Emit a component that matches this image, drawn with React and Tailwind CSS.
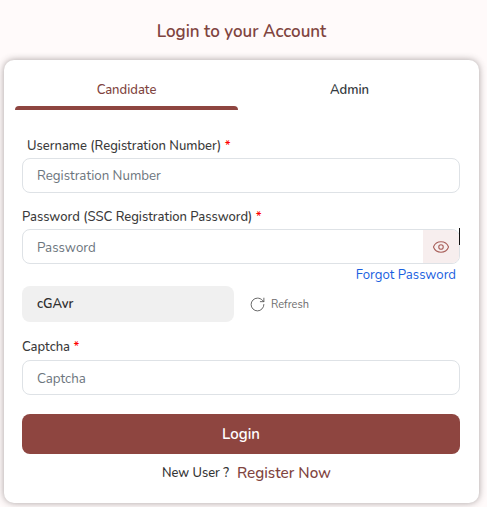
import { Eye, RotateCw } from "lucide-react";

function Req() {
  return <span className="text-[#ff0000]"> *</span>;
}

function Field({ placeholder, className = "" }) {
  return (
    <div className={`h-[35px] w-full rounded-[8px] border border-[#dee2e6] bg-white pl-[14px] flex items-center text-[13.3px] text-[#6c757d] ${className}`}>
      {placeholder}
    </div>
  );
}

export default function App() {
  return (
    <div className="h-[507px] w-[487px] overflow-hidden bg-[#fffafa] font-['Nunito','Lato','Open_Sans',sans-serif]">
      <h1 className="h-[60px] pt-[21px] pr-[4px] text-center text-[17px] leading-[21px] font-semibold text-[#7f4440]">
        Login to your Account
      </h1>
      <div className="ml-[4px] h-[443px] w-[475px] rounded-[10px] bg-white shadow-[0_0_7px_rgba(60,50,50,0.45)] pl-[11px] pt-[17px]">
        <div className="flex w-[448px]">
          <div className="w-[223px]">
            <div className="h-[29px] pt-[4px] text-center text-[13px] leading-[18px] font-medium text-[#7f4440]">Candidate</div>
            <div className="h-[4px] rounded-t-[4px] bg-[#8e4540]" />
          </div>
          <div className="flex-1 h-[29px] pt-[4px] pr-[2px] text-center text-[13px] leading-[18px] font-semibold text-[#343a40]">Admin</div>
        </div>

        <div className="ml-[7px] w-[438px]">
          <div className="mt-[27px] ml-[5px] h-[21px] text-[13px] leading-[18px] text-[#3a3a3a] font-medium">
            Username (Registration Number)<Req />
          </div>
          <Field placeholder="Registration Number" className="pt-[2px]" />

          <div className="mt-[15px] h-[21px] text-[13px] leading-[18px] text-[#3a3a3a] font-medium">
            Password (SSC Registration Password)<Req />
          </div>
          <div className="relative">
            <div className="flex h-[35px] w-full items-stretch overflow-hidden rounded-[8px] border border-[#dee2e6] bg-white">
              <div className="flex flex-1 items-center pl-[14px] pt-[5px] text-[13.3px] text-[#6c757d]">Password</div>
              <div className="flex w-[36px] items-center justify-center bg-[#f7eeee]">
                <Eye size={18} strokeWidth={1.5} className="text-[#a9615c]" />
              </div>
            </div>
            <div className="absolute right-[0px] top-[-1px] h-[17px] w-[1px] bg-[#111111]" />
          </div>
          <div className="h-[22px] pt-[2px] pr-[4px] text-right text-[13.2px] leading-[18px] text-[#1a5fe0]">
            Forgot Password
          </div>

          <div className="flex items-center">
            <div className="flex h-[36px] w-[212px] items-center rounded-[8px] bg-[#f0f0f0] pl-[15px] pt-[2px] text-[13px] font-semibold text-[#2e2e2e]">
              cGAvr
            </div>
            <RotateCw size={17} strokeWidth={1.25} className="ml-[15px] text-[#555555]" />
            <span className="ml-[5px] pt-[2px] text-[11px] text-[#6c6c6c]">Refresh</span>
          </div>

          <div className="mt-[16px] h-[22px] text-[13px] leading-[18px] text-[#3a3a3a] font-medium">
            Captcha<Req />
          </div>
          <Field placeholder="Captcha" className="pt-[4px]" />

          <div className="mt-[19px] flex h-[40px] items-center justify-center rounded-[8px] bg-[#8e4540] text-[15px] font-semibold text-white">
            Login
          </div>

          <div className="mt-[9px] flex h-[20px] items-center justify-center pl-[11px] pt-[1px]">
            <span className="text-[12.9px] font-medium text-[#333333]">New User ?</span>
            <span className="ml-[8px] text-[15.3px] font-medium text-[#7f4440]">Register Now</span>
          </div>
        </div>
      </div>
    </div>
  );
}
